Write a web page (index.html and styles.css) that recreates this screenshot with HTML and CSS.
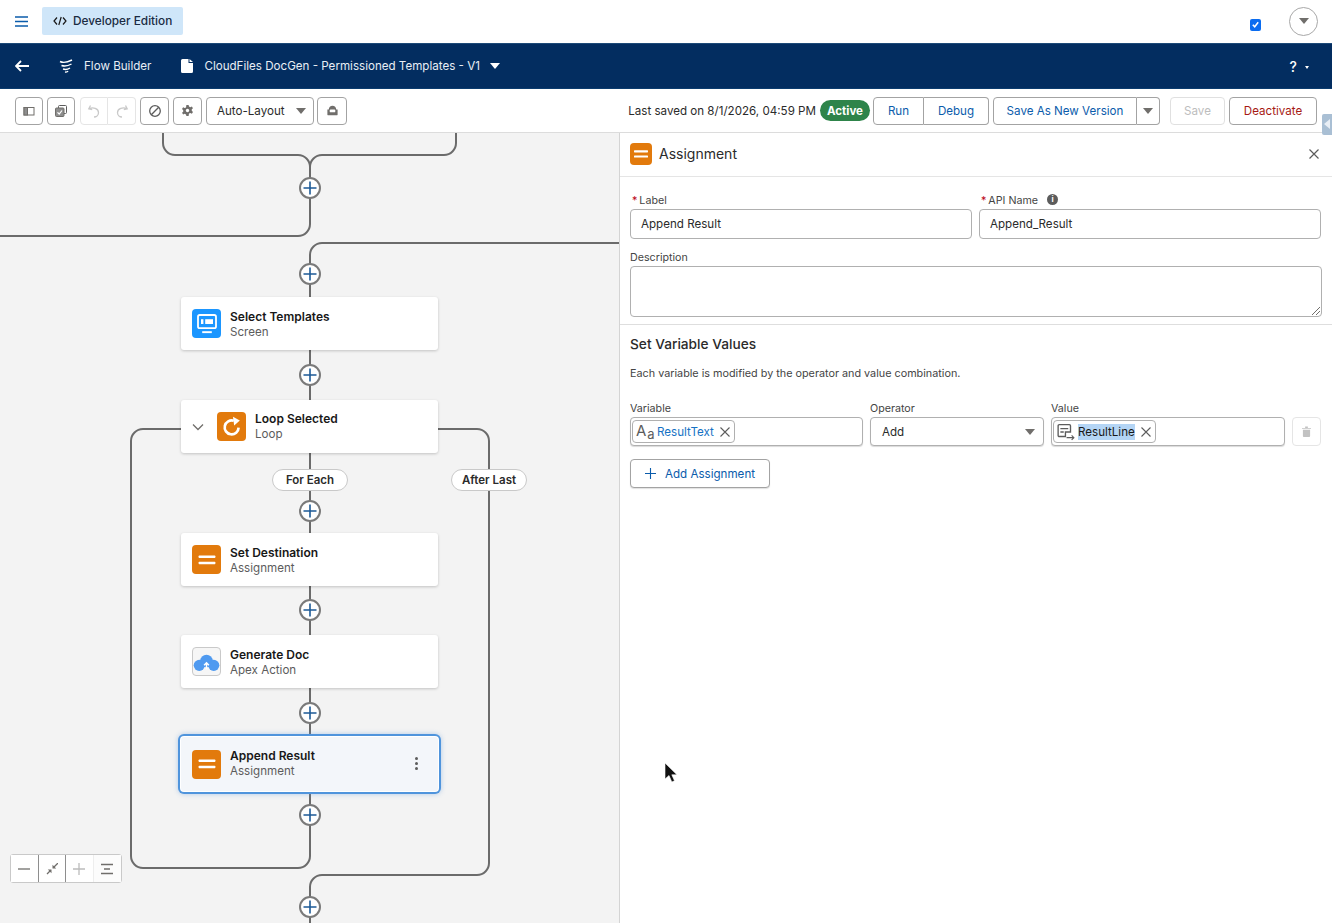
FILE: index.html
```html
<!DOCTYPE html>
<html lang="en">
<head>
<meta charset="utf-8">
<title>Flow Builder</title>
<link rel="stylesheet" href="styles.css">
</head>
<body>
<div class="app">
  <header class="topbar">
    <svg class="hamburger" viewBox="0 0 13 11"><path d="M0 1h13M0 5.500h13M0 10h13"/></svg>
    <div class="edition">
      <svg class="edition-icon" viewBox="0 0 14 10"><path d="M4 1.500 1 5l3 3.500M10 1.500 13 5l-3 3.500M8.200 1 5.800 9"/></svg>
      <span>Developer Edition</span>
    </div>
    <div class="topbar-right">
      <span class="checkbox"><svg viewBox="0 0 11 11"><path d="M2.800 5.800 4.700 7.800 8.200 3.200"/></svg></span>
      <span class="avatar"><i class="caret caret-grey"></i></span>
    </div>
  </header>

  <nav class="navbar">
    <svg class="nav-back" viewBox="0 0 14 12"><path d="M6 1 1 6l5 5M1 6h13"/></svg>
    <svg class="nav-flow" viewBox="0 0 14 14"><path d="M1 2.500c3 1.500 8 .5 12-1.500M2.500 6.500c3 1 6.500 .5 10-1.500M4 10c2 .7 5 .3 7-1M6 13c1 .2 2.500 0 3-1"/></svg>
    <span class="nav-title">Flow Builder</span>
    <svg class="nav-doc" viewBox="0 0 12 14"><path d="M1.500 0H7.500V4H12V12.500A1.500 1.500 0 0 1 10.500 14H1.500A1.500 1.500 0 0 1 0 12.500V1.500A1.500 1.500 0 0 1 1.500 0ZM8.500 0 12 3H8.500Z"/></svg>
    <span class="nav-name">CloudFiles DocGen - Permissioned Templates - V1</span>
    <i class="caret caret-white"></i>
    <span class="nav-help">?<i class="caret caret-tiny"></i></span>
  </nav>

  <div class="toolbar">
    <div class="tool-left">
      <button class="btn icon-btn"><svg viewBox="0 0 12 12" class="ti"><rect x="1" y="2.500" width="10" height="7.500" fill="none"/><rect x="1" y="2.500" width="3.500" height="7.500" class="fillg"/></svg></button>
      <button class="btn icon-btn"><svg viewBox="0 0 14 14" class="ti2"><rect x="4.500" y="1.500" width="8" height="8" rx="1" class="fillg2"/><rect x="1.500" y="4" width="8.500" height="8.500" rx="1" class="fillg"/><path d="M3.500 8.300 5.200 10 8 6.500" class="chk"/></svg></button>
      <div class="btn-group muted">
        <button class="btn icon-btn half"><svg viewBox="0 0 14 14" class="ti3"><path d="M3.500 1.500 1.800 4.800 5.200 5.600M2 4.800C6 2.800 11.500 4.500 11.500 8.500 11.500 11 9.500 13 7 13"/></svg></button>
        <button class="btn icon-btn half"><svg viewBox="0 0 14 14" class="ti3"><path d="M10.500 1.500 12.200 4.800 8.800 5.600M12 4.800C8 2.800 2.500 4.500 2.500 8.500 2.500 11 4.500 13 7 13"/></svg></button>
      </div>
      <button class="btn icon-btn wide"><svg viewBox="0 0 14 14" class="ti4"><circle cx="7" cy="7" r="5.300"/><path d="M3.300 10.700 10.700 3.300"/></svg></button>
      <button class="btn icon-btn wide"><svg viewBox="0 0 14 14" class="ti5"><path d="M5.800 1h2.400l.4 1.700 1.500.7 1.600-.8 1.200 1.900-1.300 1.200v1.600l1.300 1.200-1.200 1.900-1.600-.8-1.500.7L8.200 13H5.800l-.4-1.700-1.500-.7-1.600.8-1.200-1.900 1.300-1.200V6.700L1.100 5.500l1.200-1.900 1.600.8 1.500-.7Z"/><circle cx="7" cy="7" r="1.800" class="hole"/></svg></button>
      <button class="btn select-btn"><span>Auto-Layout</span><i class="caret caret-grey"></i></button>
      <button class="btn icon-btn wider"><svg viewBox="0 0 14 12" class="ti5"><path d="M3 5C3 2.500 4.800 1 7 1s4 1.500 4 4h1.500v5.500A.5.500 0 0 1 12 11H2a.5.500 0 0 1-.5-.5V5Z"/><rect x="4" y="5" width="6" height="3" rx="1" class="hole"/></svg></button>
    </div>
    <div class="tool-right">
      <span class="saved">Last saved on 8/1/2026, 04:59 PM</span>
      <span class="active-pill">Active</span>
      <div class="btn-group">
        <button class="btn link run">Run</button>
        <button class="btn link debug">Debug</button>
      </div>
      <div class="btn-group">
        <button class="btn link save-new">Save As New Version</button>
        <button class="btn caret-btn"><i class="caret caret-grey"></i></button>
      </div>
      <button class="btn save" disabled>Save</button>
      <button class="btn deactivate">Deactivate</button>
    </div>
    <span class="side-tab"><i></i></span>
  </div>

  <main class="workspace">
    <section class="canvas">
      <svg class="wires" viewBox="0 133 619 790">
        <defs>
          <g id="add">
            <circle r="10" class="add-ring"/>
            <path d="M-6.500 0H6.500M0-6.500V6.500" class="add-plus"/>
          </g>
        </defs>
        <path class="wire" d="M163 133V143A12 12 0 0 0 175 155H298A12 12 0 0 1 310 167V224A12 12 0 0 1 298 236H0"/>
        <path class="wire" d="M456 133V143A12 12 0 0 1 444 155H322A12 12 0 0 0 310 167"/>
        <path class="wire" d="M619 243H322A12 12 0 0 0 310 255V297"/>
        <path class="wire" d="M310 350V400M310 453V533M310 586V635M310 688V735M310 793V856A12 12 0 0 1 298 868H143A12 12 0 0 1 131 856V441A12 12 0 0 1 143 429H181"/>
        <path class="wire" d="M438 429H477A12 12 0 0 1 489 441V863A12 12 0 0 1 477 875H322A12 12 0 0 0 310 887V923"/>
        <use href="#add" x="310" y="188"/>
        <use href="#add" x="310" y="274"/>
        <use href="#add" x="310" y="375"/>
        <use href="#add" x="310" y="511"/>
        <use href="#add" x="310" y="610"/>
        <use href="#add" x="310" y="713"/>
        <use href="#add" x="310" y="815"/>
        <use href="#add" x="310" y="907"/>
      </svg>

      <div class="node n-select">
        <span class="nicon blue"><svg viewBox="0 0 20 20"><rect x="2.500" y="2.500" width="15" height="11" rx="1.500" class="ol"/><rect x="5" y="6" width="2" height="4" class="sol"/><rect x="8.500" y="6" width="6.500" height="4" class="sol"/><rect x="6" y="16" width="8" height="1.600" class="sol"/></svg></span>
        <div class="ntext"><b>Select Templates</b><span>Screen</span></div>
      </div>

      <div class="node n-loop">
        <svg class="chev" viewBox="0 0 12 8"><path d="M1 1.500 6 6.500 11 1.500"/></svg>
        <span class="nicon orange"><svg viewBox="0 0 20 20"><path d="M15.500 10.500A5.800 5.800 0 1 1 11.500 4.800" class="ring"/><path d="M10.800 1.500 16.500 4.500 11.800 8.800Z" class="sol"/></svg></span>
        <div class="ntext"><b>Loop Selected</b><span>Loop</span></div>
      </div>

      <span class="branch b-each">For Each</span>
      <span class="branch b-last">After Last</span>

      <div class="node n-dest">
        <span class="nicon orange"><svg viewBox="0 0 20 20"><rect x="3" y="6.200" width="14" height="2.200" rx=".6" class="sol"/><rect x="3" y="11.400" width="14" height="2.200" rx=".6" class="sol"/></svg></span>
        <div class="ntext"><b>Set Destination</b><span>Assignment</span></div>
      </div>

      <div class="node n-doc">
        <span class="nicon outline"><svg viewBox="0 0 28 28"><circle cx="14" cy="13.500" r="6.500" class="cloud"/><circle cx="6.500" cy="18" r="5.800" class="cloud"/><circle cx="21.500" cy="18" r="5.800" class="cloud"/><path d="M14 22V15.500M11.500 17.800 14 15.300 16.500 17.800" class="arrow"/></svg></span>
        <div class="ntext"><b>Generate Doc</b><span>Apex Action</span></div>
      </div>

      <div class="node n-append">
        <span class="nicon orange"><svg viewBox="0 0 20 20"><rect x="3" y="6.200" width="14" height="2.200" rx=".6" class="sol"/><rect x="3" y="11.400" width="14" height="2.200" rx=".6" class="sol"/></svg></span>
        <div class="ntext"><b>Append Result</b><span>Assignment</span></div>
        <span class="kebab"><i></i><i></i><i></i></span>
      </div>

      <div class="zoombar">
        <button class="zb"><svg viewBox="0 0 12 12"><path d="M0 6H12" class="zs"/></svg></button>
        <button class="zb"><svg viewBox="0 0 12 12"><path d="M12 0 7.500 4.500M1 11 4.500 7.500" class="zs"/><path d="M6.500 1.800V5.500H10.200ZM1.800 6.500H5.500V10.200Z" class="zf"/></svg></button>
        <button class="zb off"><svg viewBox="0 0 12 12"><path d="M0 6H12M6 0V12" class="zs"/></svg></button>
        <button class="zb off"><svg viewBox="0 0 12 12"><path d="M0 1.500H12M3 6H9M0 10.500H12" class="zs"/></svg></button>
      </div>
    </section>

    <aside class="panel">
      <div class="panel-head">
        <span class="nicon orange small"><svg viewBox="0 0 20 20"><rect x="3" y="6.200" width="14" height="2.200" rx=".6" class="sol"/><rect x="3" y="11.400" width="14" height="2.200" rx=".6" class="sol"/></svg></span>
        <h2>Assignment</h2>
        <svg class="close" viewBox="0 0 10 10"><path d="M.5.500 9.500 9.500M9.500.500 .5 9.500"/></svg>
      </div>

      <div class="props">
        <div class="two">
          <div class="field">
            <label><em>*</em>Label</label>
            <div class="input">Append Result</div>
          </div>
          <div class="field">
            <label><em>*</em>API Name <span class="info">i</span></label>
            <div class="input">Append_Result</div>
          </div>
        </div>
        <div class="field">
          <label>Description</label>
          <div class="textarea"><svg class="grip" viewBox="0 0 8 8"><path d="M8 0 0 8M8 4 4 8"/></svg></div>
        </div>
      </div>

      <div class="vars">
        <h3>Set Variable Values</h3>
        <p>Each variable is modified by the operator and value combination.</p>
        <div class="assign-row">
          <div class="field">
            <label>Variable</label>
            <div class="input pillbox">
              <span class="pill">
                <span class="aa">A<small>a</small></span>
                <span class="pill-link">ResultText</span>
                <svg class="x" viewBox="0 0 10 10"><path d="M.5.500 9.500 9.500M9.500.500 .5 9.500"/></svg>
              </span>
            </div>
          </div>
          <div class="field">
            <label>Operator</label>
            <div class="input op"><span>Add</span><i class="caret caret-grey"></i></div>
          </div>
          <div class="field">
            <label>Value</label>
            <div class="input pillbox">
              <span class="pill">
                <svg class="rec" viewBox="0 0 16 16"><path d="M2 1.500H11A1 1 0 0 1 12 2.500V8H7.500V12H2A1 1 0 0 1 1 11V2.500A1 1 0 0 1 2 1.500Z" class="rec-a"/><path d="M3 5H10M3 8H6" class="rec-b"/><path d="M8.500 13H15M13 11 15 13 13 15" class="rec-c"/></svg>
                <span class="sel">ResultLine</span>
                <svg class="x" viewBox="0 0 10 10"><path d="M.5.500 9.500 9.500M9.500.500 .5 9.500"/></svg>
              </span>
            </div>
          </div>
          <button class="btn trash"><svg viewBox="0 0 10 12"><path d="M0 2H10V3H0ZM3.500 .5H6.500V2H3.500ZM1 4H9V11A1 1 0 0 1 8 12H2A1 1 0 0 1 1 11Z"/></svg></button>
        </div>
        <button class="btn add-assign"><svg viewBox="0 0 12 12"><path d="M6 0V12M0 6H12"/></svg><span>Add Assignment</span></button>
      </div>
    </aside>
  </main>

  <svg class="cursor" viewBox="0 0 14 20"><path d="M1 0V16L5 12.500 7.800 19 10.500 17.800 7.800 11.800H13Z"/></svg>
</div>
</body>
</html>
```
FILE: styles.css
```css
* { box-sizing: border-box; }
html, body { margin: 0; height: 100%; }
body { font-family: Inter, "Liberation Sans", sans-serif; font-size: 11.600px; color: #181818; background: #fff; overflow: hidden; }
button { font: inherit; margin: 0; }
.app { width: 1332px; height: 923px; display: flex; flex-direction: column; position: relative; overflow: hidden; }

.caret { display: block; width: 0; height: 0; border-left: 5px solid transparent; border-right: 5px solid transparent; border-top: 6px solid #706e6b; }
.caret-white { border-top-color: #fff; margin-left: 10px; }
.caret-tiny { display: inline-block; border-left-width: 2.500px; border-right-width: 2.500px; border-top: 3px solid #fff; margin-left: 8px; vertical-align: 3px; }

/* top bar */
.topbar { height: 44px; flex: none; display: flex; align-items: center; padding: 0 15px 1px; background: #fff; border-bottom: 1px solid #1d4a78; }
.hamburger { width: 13px; height: 11px; fill: none; stroke: #0b5cab; stroke-width: 1.500; }
.edition { margin-left: 14px; width: 141px; height: 28px; display: flex; align-items: center; padding-left: 11px; gap: 6px; background: #cfe6f9; border-radius: 2px; font-size: 11.800px; font-weight: 500; color: #1a2b42; }
.edition-icon { width: 14px; height: 10px; fill: none; stroke: #181818; stroke-width: 1.200; }
.topbar-right { margin-left: auto; display: flex; align-items: center; gap: 28px; }
.checkbox { width: 11px; height: 12px; margin-top: 7px; background: #0a6cf0; border-radius: 2px; display: block; }
.checkbox svg { display: block; fill: none; stroke: #fff; stroke-width: 1.500; }
.avatar { width: 29px; height: 29px; margin-right: -1px; border: 1px solid #a8a8a8; border-radius: 50%; display: flex; align-items: center; justify-content: center; }

/* nav */
.navbar { height: 45px; flex: none; display: flex; align-items: center; padding: 0 23px 0 15px; background: #032d60; color: #fff; border-bottom: 1px solid #0b3c6f; }
.nav-back { width: 14px; height: 12px; fill: none; stroke: #fff; stroke-width: 1.800; }
.nav-flow { width: 14px; height: 14px; margin-left: 30px; fill: none; stroke: #fff; stroke-width: 1.400; }
.nav-title { margin-left: 11px; color: #e8eef5; }
.nav-doc { width: 12px; height: 14px; margin-left: 30px; fill: #fff; }
.nav-name { margin-left: 11px; color: #e8eef5; }
.nav-help { margin-left: auto; font-size: 14px; font-weight: 500; }

/* toolbar */
.toolbar { height: 44px; flex: none; display: flex; align-items: center; justify-content: space-between; padding: 0 15px; background: #fff; border-bottom: 1px solid #dcdcdc; position: relative; }
.tool-left, .tool-right { display: flex; align-items: center; }
.tool-left { gap: 4px; }
.btn { height: 28px; padding: 0; background: #fff; border: 1px solid #a3a3a3; border-radius: 4px; display: flex; align-items: center; justify-content: center; color: #0b5cab; }
.icon-btn { width: 28px; }
.icon-btn.wide { width: 29px; }
.icon-btn.wider { width: 30px; margin-left: -1px; }
.btn-group { display: flex; }
.btn-group .btn:first-child { border-radius: 4px 0 0 4px; }
.btn-group .btn:last-child { border-radius: 0 4px 4px 0; border-left: 0; }
.btn-group.muted { margin-left: 1px; }
.btn-group.muted .btn { border-color: #e5e5e5; }
.half { width: 28px; }
.ti { width: 12px; height: 12px; stroke: #706e6b; stroke-width: 1; }
.ti2 { width: 14px; height: 14px; stroke: #5c5c5c; stroke-width: 1; }
.fillg { fill: #8e8e8e; stroke: #706e6b; }
.fillg2 { fill: #fff; }
.chk { fill: none; stroke: #fff; stroke-width: 1.200; }
.ti3 { width: 14px; height: 14px; fill: none; stroke: #c9c9c9; stroke-width: 1.300; }
.ti4 { width: 14px; height: 14px; fill: none; stroke: #5c5c5c; stroke-width: 1.300; }
.ti5 { width: 13px; height: 13px; fill: #706e6b; }
.hole { fill: #fff; }
.select-btn { width: 108px; justify-content: space-between; padding: 0 7px 0 10px; color: #2b2b2b; }

.saved { color: #2b2b2b; margin-right: 4px; }
.active-pill { width: 50px; height: 21px; border-radius: 11px; background: #2e844a; color: #fff; font-weight: 700; font-size: 11.500px; display: flex; align-items: center; justify-content: center; margin-right: 3px; }
.link { color: #0b5cab; }
.run { width: 51px; }
.debug { width: 65px; }
.save-new { width: 144px; }
.caret-btn { width: 23px; }
.tool-right .btn-group + .btn-group { margin-left: 4px; }
.save { width: 55px; margin-left: 10px; border-color: #e0e0e0; color: #bdbdbd; }
.deactivate { width: 88px; margin-left: 4px; color: #a61a14; }
.side-tab { position: absolute; right: 0; top: 25px; width: 10px; height: 21px; background: #a9bfd4; border-radius: 2px 0 0 2px; overflow: hidden; }
.side-tab i { display: block; width: 0; height: 0; margin: 5px 0 0 2px; border-top: 5px solid transparent; border-bottom: 5px solid transparent; border-right: 6px solid #e8eef5; }

/* workspace */
.workspace { flex: 1; display: flex; min-height: 0; }
.canvas { width: 619px; flex: none; position: relative; background: #f3f3f3; overflow: hidden; }
.wires { position: absolute; left: 0; top: 0; width: 619px; height: 790px; }
.wire { fill: none; stroke: #6b6b6b; stroke-width: 2; }
.add-ring { fill: #fff; stroke: #7a7a7a; stroke-width: 2; }
.add-plus { fill: none; stroke: #1d5a96; stroke-width: 1.600; }

.node { position: absolute; left: 181px; width: 257px; height: 53px; background: #fff; border-radius: 3px; box-shadow: 0 1px 3px rgba(0,0,0,.2); display: flex; align-items: center; padding-left: 11px; gap: 9px; }
.n-select { top: 164px; }
.n-loop { top: 267px; gap: 0; padding-bottom: 2px; }
.n-dest { top: 400px; }
.n-doc { top: 502px; }
.n-append { top: 604px; height: 54px; padding-bottom: 2px; background: #f3f6fa; box-shadow: 0 0 0 1px #fff, 0 0 0 3px #4f94dc, 0 0 5px 3px rgba(90,150,220,.45); }
.nicon { width: 29px; height: 29px; flex: none; border-radius: 4px; display: flex; align-items: center; justify-content: center; }
.nicon svg { width: 24px; height: 24px; }
.nicon.small { width: 22px; height: 22px; }
.nicon.small svg { width: 20px; height: 20px; }
.blue { background: #1b96ff; }
.orange { background: #e27a0c; }
.n-loop .nicon, .n-append .nicon { position: relative; top: 1px; }
.outline { background: #f6f6f6; border: 1px solid #c9c9c9; overflow: hidden; }
.outline svg { width: 27px; height: 27px; flex: none; }
.ol { fill: none; stroke: #fff; stroke-width: 1.500; }
.sol { fill: #fff; }
.ring { fill: none; stroke: #fff; stroke-width: 2.200; }
.cloud { fill: #4f9af0; }
.arrow { fill: none; stroke: #fff; stroke-width: 1.500; }
.ntext { display: flex; flex-direction: column; gap: 3px; line-height: 13px; padding-top: 1px; }
.ntext b { font-weight: 600; font-size: 12px; color: #181818; }
.ntext span { color: #5c5c5c; font-size: 11.600px; }
.chev { width: 12px; height: 8px; fill: none; stroke: #706e6b; stroke-width: 1.300; }
.n-loop .chev { margin-right: 13px; margin-top: 2px; }
.n-loop .ntext { margin-left: 9px; }
.kebab { margin-left: auto; margin-right: 20px; display: flex; flex-direction: column; gap: 2px; }
.kebab i { display: block; width: 3px; height: 3px; border-radius: 50%; background: #5c5c5c; }

.branch { position: absolute; top: 336px; width: 76px; height: 22px; background: #fff; border: 1px solid #c9c9c9; border-radius: 11px; display: flex; align-items: center; justify-content: center; font-size: 11.500px; font-weight: 600; color: #2b2b2b; }
.b-each { left: 272px; }
.b-last { left: 451px; }

.zoombar { position: absolute; left: 10px; bottom: 40px; display: flex; background: #fff; border: 1px solid #c9c9c9; border-radius: 3px; }
.zb { width: 27.500px; height: 27px; padding: 0; background: #fff; border: 0; border-right: 1px solid #8e8e8e; display: flex; align-items: center; justify-content: center; }
.zb:nth-child(3) { border-right-color: #eee; }
.zb:last-child { border-right: 0; background: #fcfcfc; }
.zb svg { width: 12px; height: 12px; }
.zs { fill: none; stroke: #706e6b; stroke-width: 1.300; }
.off .zs { stroke: #bcbcbc; }
.off:last-child .zs { stroke: #706e6b; }
.zf { fill: #706e6b; }

/* panel */
.panel { flex: 1; min-width: 0; background: #fff; border-left: 1px solid #d4d4d4; box-shadow: -1px 0 2px rgba(0,0,0,.06); display: flex; flex-direction: column; }
.panel-head { height: 44px; flex: none; display: flex; align-items: center; padding: 0 13px 2px 10px; border-bottom: 1px solid #e5e5e5; gap: 7px; }
.panel-head h2 { margin: 0; font-size: 14px; font-weight: 400; color: #2b2b2b; }
.close { width: 10px; height: 10px; margin-left: auto; fill: none; stroke: #5c5c5c; stroke-width: 1.200; }
.props { padding: 13px 10px 7px; border-bottom: 1px solid #dedede; display: flex; flex-direction: column; gap: 8px; }
.two { display: grid; grid-template-columns: 342px 342px; column-gap: 7px; }
.field { display: flex; flex-direction: column; min-width: 0; }
label { font-size: 10.700px; line-height: 16px; height: 19px; padding-top: 2px; color: #444; display: flex; align-items: center; }
label em { color: #ba0517; font-style: normal; margin: 0 2px 0 2px; }
.info { width: 11px; height: 11px; margin-left: 9px; border-radius: 50%; background: #5c5c5c; color: #fff; font-size: 8px; font-weight: 700; line-height: 11px; text-align: center; display: block; margin-top: -2px; }
.input { height: 30px; border: 1px solid #b0b0b0; border-radius: 4px; background: #fff; display: flex; align-items: center; padding: 0 10px; color: #2b2b2b; }
.textarea { height: 51px; border: 1px solid #b0b0b0; border-radius: 4px; background: #fff; position: relative; }
.grip { position: absolute; right: 1px; bottom: 1px; width: 8px; height: 8px; fill: none; stroke: #706e6b; stroke-width: 1; }
.vars { padding: 11px 10px; }
.vars h3 { margin: 0; font-size: 13.700px; line-height: 17px; font-weight: 500; color: #2b2b2b; }
.vars p { margin: 14px 0 0; font-size: 10.800px; line-height: 14px; color: #444; }
.assign-row { display: grid; grid-template-columns: 233px 174px 234px 29px; column-gap: 7px; margin-top: 17px; align-items: end; }
.assign-row .input { height: 29px; box-shadow: 0 1px 1px rgba(0,0,0,.15); }
.pillbox { padding: 0 1px; }
.pill { height: 23px; display: flex; align-items: center; padding: 0 4px 0 3px; border: 1px solid #b0b0b0; border-radius: 4px; gap: 3px; background: #fff; }
.aa { font-size: 15px; color: #5c5c5c; line-height: 1; display: flex; align-items: flex-start; width: 18px; }
.aa small { font-size: 13px; margin-top: 5px; margin-left: 1px; }
.pill-link { color: #1672c4; }
.x { width: 10px; height: 10px; margin-left: 3px; fill: none; stroke: #5c5c5c; stroke-width: 1.100; }
.rec { width: 18px; height: 18px; fill: none; flex: none; }
.rec-a { fill: #fff; stroke: #5c5c5c; stroke-width: 1.200; }
.rec-b { stroke: #5c5c5c; stroke-width: 1.200; }
.rec-c { stroke: #5c5c5c; stroke-width: 1; }
.sel { background: #b4d5f5; color: #181818; line-height: 16px; }
.assign-row .op { justify-content: space-between; padding: 0 8px 0 11px; }
.trash { width: 29px; height: 29px; border-color: #e5e5e5; }
.trash svg { width: 9px; height: 11px; fill: #c2c2c2; }
.add-assign { width: 140px; height: 29px; margin-top: 13px; gap: 9px; justify-content: flex-start; padding-left: 14px; box-shadow: 0 1px 1px rgba(0,0,0,.12); }
.add-assign svg { width: 11px; height: 11px; fill: none; stroke: #0b5cab; stroke-width: 1.200; }

.cursor { position: absolute; left: 664px; top: 763px; width: 14px; height: 20px; fill: #111; stroke: #fff; stroke-width: .6; }
```
